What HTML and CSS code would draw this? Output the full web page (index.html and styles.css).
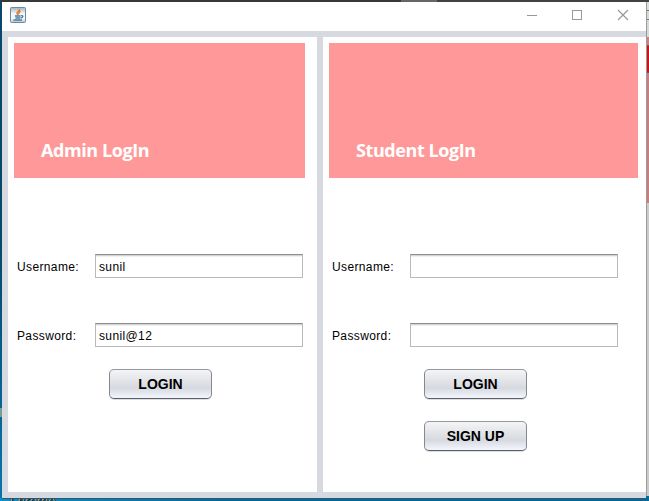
FILE: index.html
```html
<!DOCTYPE html>
<html lang="en">
<head>
<meta charset="utf-8">
<title>Login</title>
<link rel="stylesheet" href="styles.css">
</head>
<body>
<div class="desktop">
  <div class="taskbar-edge"></div>
  <div class="back-window"><div class="back-gap"></div><div class="back-pink"></div><div class="back-red"></div><div class="back-panel"></div></div>
  <div class="side-item"></div>
  <span class="shortcut">Chrome</span>
  <main class="window">
    <header class="titlebar">
      <svg class="app-icon" width="16" height="16" viewBox="0 0 16 16">
        <defs><linearGradient id="tile" x2="0" y2="1"><stop stop-color="#9fb4c3"/><stop offset=".4" stop-color="#f4f6f8"/><stop offset=".75" stop-color="#f4f7f9"/><stop offset="1" stop-color="#a9c0cf"/></linearGradient></defs>
        <rect x=".5" y=".5" width="15" height="15" rx="1" fill="url(#tile)" stroke="#6d8ba1"/>
        <path d="M9.300 2c1 2-3 2.800-2.300 4.300 .3.700.8 1 .8 1.900M10.500 4.200C8.700 5 8.500 6 9.200 7.200" fill="none" stroke="#e17c2c" stroke-width="1.500"/>
        <path d="M5 9h5.500M5.500 11h4.500M3.500 13h8.500M11 8.700c2.700-.4 2.200 2-.5 2.300" fill="none" stroke="#4d7d9e" stroke-width="1.300"/>
      </svg>
      <svg class="controls" width="102" height="12" viewBox="0 0 102 12" fill="none" stroke="#999">
        <path d="M0 6.500h10"/><rect x="45.500" y="1.500" width="9" height="9"/><path d="M91 1l10 10M101 1L91 11" stroke-width="1.150"/>
      </svg>
    </header>
    <div class="content">
      <section class="panel">
        <div class="banner"><h1>Admin LogIn</h1></div>
        <form class="form">
          <label class="row"><span>Username:</span><input type="text" value="sunil"></label>
          <label class="row"><span>Password:</span><input type="text" value="sunil@12"></label>
          <button type="button">LOGIN</button>
        </form>
      </section>
      <section class="panel panel-student">
        <div class="banner"><h1>Student LogIn</h1></div>
        <form class="form">
          <label class="row"><span>Username:</span><input type="text"></label>
          <label class="row"><span>Password:</span><input type="text"></label>
          <button type="button">LOGIN</button>
          <button type="button">SIGN UP</button>
        </form>
      </section>
    </div>
  </main>
</div>
</body>
</html>
```
FILE: styles.css
```css
* { box-sizing: border-box; }
body { margin: 0; overflow: hidden; }
.desktop {
  position: relative;
  width: 649px;
  height: 501px;
  overflow: hidden;
  background: linear-gradient(90deg, #0a91cb 0, #087eb2 90px, #066a98 220px);
}
.desktop::before {
  content: "";
  position: absolute;
  left: 0;
  top: 0;
  width: 2px;
  height: 498px;
  background: linear-gradient(#05486c, #054a6e 50%, #0875aa);
}
.taskbar-edge {
  position: absolute;
  inset: 0 0 auto;
  height: 2px;
  background: linear-gradient(90deg, #383838 401px, #666 401px, #666 437px, #424242 437px);
}
.back-window {
  position: absolute;
  left: 646px;
  top: 2px;
  width: 3px;
  height: 494px;
  background: #cbcbcb;
  border-left: 1px solid #9b9b9b;
}
.back-gap { height: 35px; background: linear-gradient(#dce0dd 8px, #777 8px, #777 9px, #d5dad6 9px, #d5dad6 17px, #777 17px, #777 18px, #d5dad6 18px); }
.back-pink { height: 8px; background: #d47e80; }
.back-red { height: 28px; background: #cf1016; border-top: 1px solid #8b5354; border-bottom: 1px solid #55595d; }
.back-panel { height: 130px; background: #cc7c7c; }
.side-item { position: absolute; left: 0; top: 408px; width: 2px; height: 9px; background: #7c9d8d; }
.shortcut {
  position: absolute;
  left: 10px;
  top: 494px;
  font: 12px/14px "Open Sans", sans-serif;
  color: #b8b1aa;
  text-shadow: 1px 1px 1px #000, 0 0 1px #222;
}
.window {
  position: absolute;
  left: 2px;
  top: 2px;
  width: 644px;
  height: 496px;
  display: flex;
  flex-direction: column;
  background: #fff;
  box-shadow: 0 1px 0 #315869;
}
.titlebar {
  height: 29px;
  display: flex;
  justify-content: space-between;
  padding: 5px 17px 0 8px;
}
.controls { margin-top: 2px; }
.content {
  flex: 1;
  display: grid;
  grid-template-columns: 309px 1fr;
  gap: 6px;
  padding: 6px 0 6px 6px;
  background: #d6d9e0;
}
.panel { background: #fff; padding: 6px 12px 0 6px; }
.panel-student { padding-right: 8px; }
.banner {
  height: 135px;
  padding: 95px 0 0 27px;
  background: #ff9999;
}
h1 {
  margin: 0;
  color: #fff;
  font: 700 18px/25px "Open Sans", sans-serif;
  letter-spacing: -.42px;
}
.form { padding: 76px 0 0 3px; }
.row {
  display: flex;
  align-items: center;
  height: 24px;
  margin-bottom: 45px;
  font: 12px/16px "Liberation Sans", Arial, sans-serif;
  color: #000;
}
.row span { width: 78px; padding-top: 2px; letter-spacing: .37px; }
input {
  width: 208px;
  height: 24px;
  padding: 2px 3px 0;
  border: 1px solid #b9b9b9;
  border-top-color: #8d8d8d;
  box-shadow: inset 0 1px #d4d4d4, inset 0 2px #f0f0f0;
  border-radius: 0;
  outline: 0;
  background: #fff;
  color: #000;
  font: 12px "Liberation Sans", Arial, sans-serif;
  letter-spacing: .37px;
}
.row:nth-child(2) { margin-bottom: 22px; }
button {
  display: block;
  width: 103px;
  height: 30px;
  margin: 0 0 22px 92px;
  padding: 0;
  border: 1px solid #777a80;
  border-color: #96989d #85888e #5b5e64;
  border-radius: 5px;
  background: linear-gradient(#f5f5f7, #dfe1e5 45%, #d6d9e0 65%, #f3f6fc);
  box-shadow: 0 1px #dedfe3;
  color: #000;
  font: bold 14px/28px "Liberation Sans", Arial, sans-serif;
}
```
